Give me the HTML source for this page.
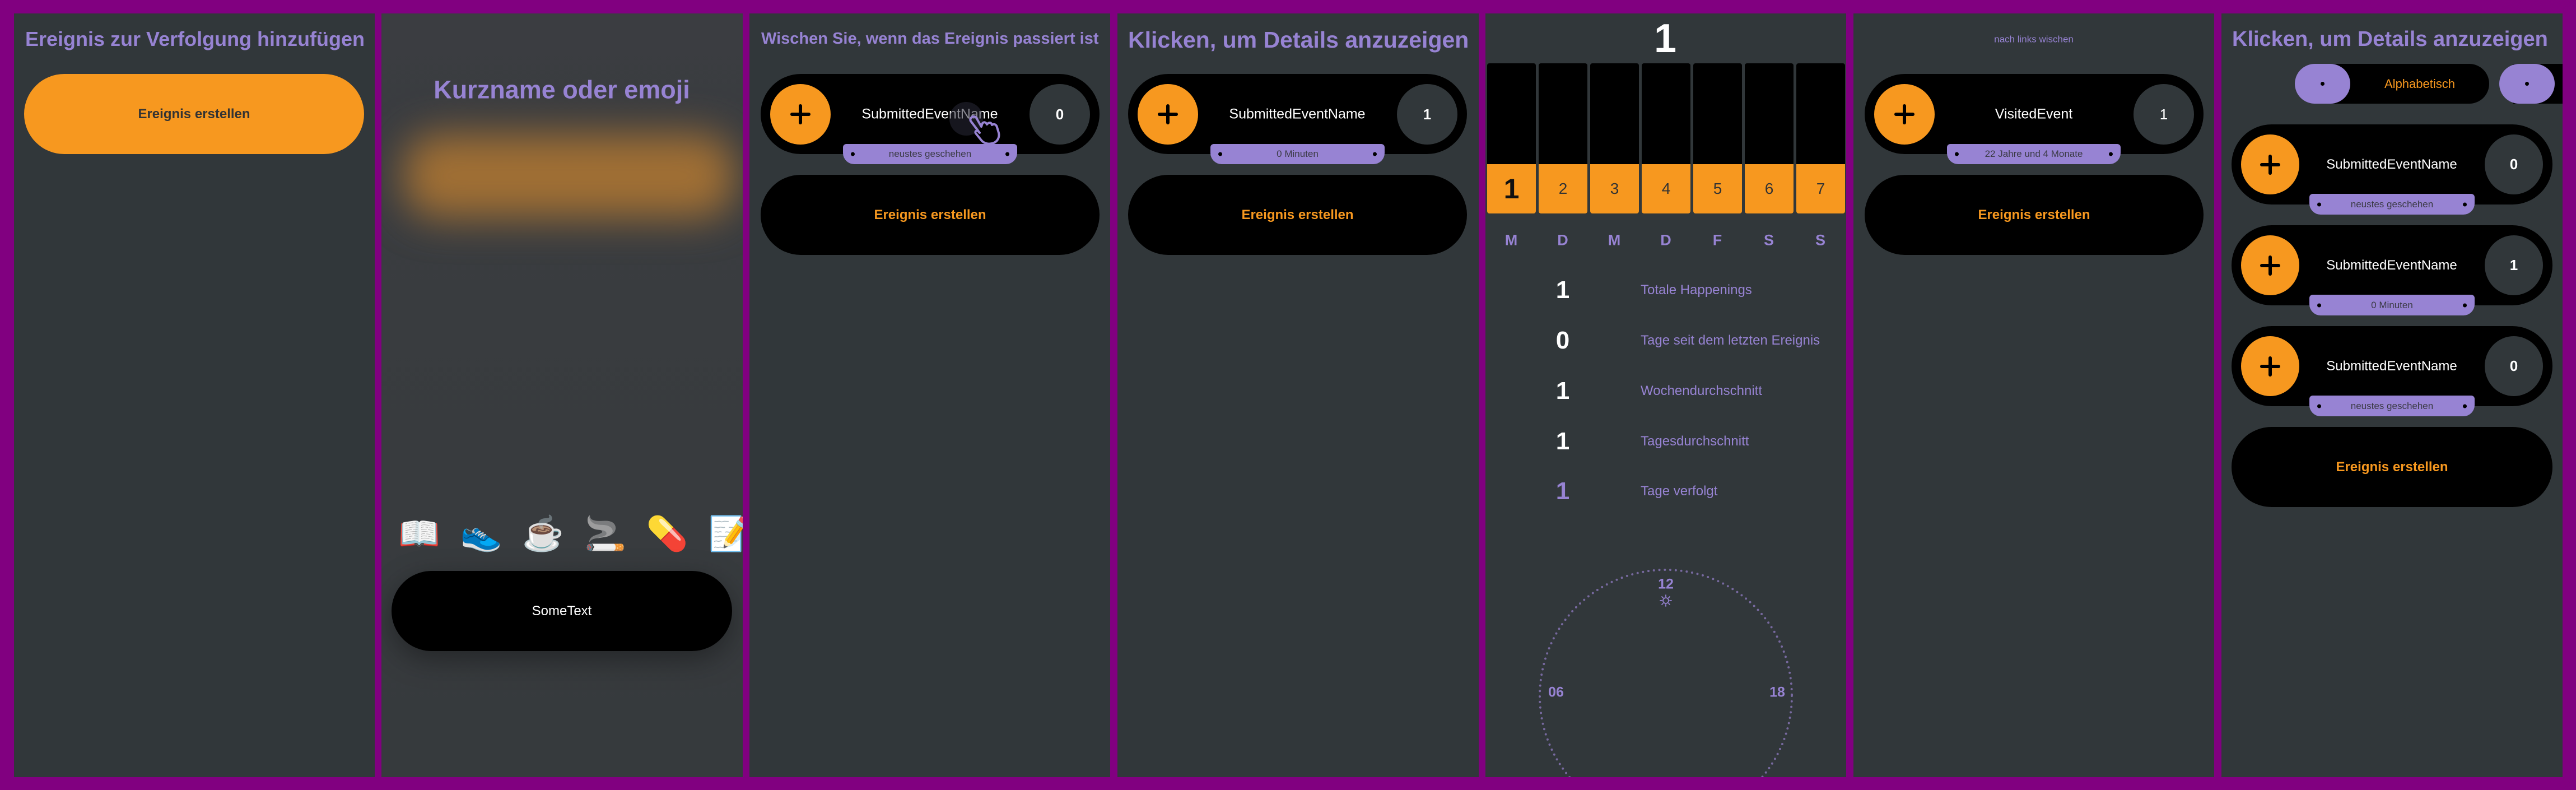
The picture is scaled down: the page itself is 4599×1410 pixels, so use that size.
<!DOCTYPE html>
<html><head><meta charset="utf-8"><style>
*{margin:0;padding:0;box-sizing:border-box}
body{width:4599px;height:1410px;background:#810080;position:relative;overflow:hidden;font-family:"Liberation Sans",sans-serif}
.p{position:absolute;top:24px;height:1363px;background:#31373a;overflow:hidden}
.a{position:absolute}
.t{position:absolute;white-space:nowrap;line-height:1}
.c{transform:translate(-50%,-50%)}
.pur{color:#9783d3}
.card{position:absolute;background:#000;border-radius:72px}
.oc{position:absolute;background:#f7981f;border-radius:50%}
.oc:before,.oc:after{content:"";position:absolute;background:#000;border-radius:3px;left:50%;top:50%;transform:translate(-50%,-50%)}
.oc:before{width:36px;height:6px}.oc:after{width:6px;height:36px}
.cc{position:absolute;background:#31373a;border-radius:50%;color:#fff;font-weight:bold;font-size:26px;display:flex;align-items:center;justify-content:center}
.nm{position:absolute;color:#fff;font-size:25px;white-space:nowrap;transform:translate(-50%,-50%);line-height:1}
.bd{position:absolute;background:#9783d3;border-radius:6px 6px 20px 20px;color:#3a3a44;font-size:17px;display:flex;align-items:center;justify-content:center}
.bd:before,.bd:after{content:"";position:absolute;top:50%;width:7px;height:7px;border-radius:50%;background:#000;transform:translateY(-50%)}
.bd:before{left:14px}.bd:after{right:14px}
.btn{position:absolute;background:#000;border-radius:72px;color:#f7981f;font-weight:bold;font-size:24px;display:flex;align-items:center;justify-content:center}
.col{position:absolute;top:89px;width:87px;height:268px;border-radius:4px;overflow:hidden;background:#000}
.col i{position:absolute;left:0;right:0;bottom:0;height:88px;background:#f7981f;font-style:normal;color:#333;font-size:28px;display:flex;align-items:center;justify-content:center}
</style></head><body>

<!-- Panel 1 -->
<div class="p" style="left:25px;width:644px">
  <div class="t pur" style="left:20px;top:28px;font-size:36px;font-weight:bold">Ereignis zur Verfolgung hinzufügen</div>
  <div class="btn" style="left:18px;top:108px;width:607px;height:143px;background:#f7981f;color:#333">Ereignis erstellen</div>
</div>

<!-- Panel 2 -->
<div class="p" style="left:681px;width:645px;background:linear-gradient(#3b3d41,#383b3e 60%,#363a3d)">
  <div class="a" style="left:40px;top:215px;width:590px;height:150px;background:#a06f34;filter:blur(35px);border-radius:60px"></div>
  <div class="t pur c" style="left:322px;top:136px;font-size:45px;font-weight:bold">Kurzname oder emoji</div>
  <div class="t" style="left:30px;top:899px;font-size:60px;font-family:'Noto Color Emoji','DejaVu Sans',sans-serif;letter-spacing:36px">📖👟☕🚬💊📝</div>
  <div class="btn" style="left:18px;top:995px;width:608px;height:143px;color:#fff;font-weight:normal;box-shadow:0 15px 50px rgba(0,0,0,.35)">SomeText</div>
</div>

<!-- Panel 3 -->
<div class="p" style="left:1338px;width:644px">
  <div class="t pur" style="left:21px;top:31px;font-size:29px;font-weight:bold">Wischen Sie, wenn das Ereignis passiert ist</div>
  <div class="card" style="left:20px;top:108px;width:605px;height:143px">
    <div class="oc" style="left:17px;top:18px;width:108px;height:108px"></div>
    <div class="nm" style="left:302px;top:72px">SubmittedEventName</div>
    <div class="cc" style="right:17px;top:18px;width:108px;height:108px">0</div>
  </div>
  <div class="a" style="left:357px;top:158px;width:60px;height:60px;border-radius:50%;background:rgba(40,40,55,.55)"></div>
  <svg class="a" style="left:390px;top:180px" width="60" height="55" viewBox="0 0 60 55"><path d="M6 6 C10 2 14 4 16 8 L24 22 L26 16 C29 13 32 14 34 18 L36 16 C39 14 42 15 43 19 L45 18 C48 17 51 19 52 23 L55 33 C57 42 52 50 43 52 C35 54 27 51 23 45 L14 34 C12 31 15 28 18 30 L21 33 L5 12 C4 10 4 8 6 6 Z" fill="none" stroke="#9783d3" stroke-width="4" stroke-linejoin="round"/></svg>
  <div class="bd" style="left:167px;top:233px;width:311px;height:36px">neustes geschehen</div>
  <div class="btn" style="left:20px;top:288px;width:605px;height:143px">Ereignis erstellen</div>
</div>

<!-- Panel 4 -->
<div class="p" style="left:1995px;width:645px">
  <div class="t pur" style="left:19px;top:27px;font-size:41px;font-weight:bold">Klicken, um Details anzuzeigen</div>
  <div class="card" style="left:19px;top:108px;width:605px;height:143px">
    <div class="oc" style="left:17px;top:18px;width:108px;height:108px"></div>
    <div class="nm" style="left:302px;top:72px">SubmittedEventName</div>
    <div class="cc" style="right:17px;top:18px;width:108px;height:108px">1</div>
  </div>
  <div class="bd" style="left:166px;top:233px;width:311px;height:36px">0 Minuten</div>
  <div class="btn" style="left:19px;top:288px;width:605px;height:143px">Ereignis erstellen</div>
</div>

<!-- Panel 5 -->
<div class="p" style="left:2652px;width:644px">
  <div class="t c" style="left:321px;top:45px;font-size:72px;font-weight:bold;color:#fff">1</div>
  <div class="col" style="left:3px"><span class="t" style="left:5px;top:239px;color:#fff;font-weight:bold;font-size:27px">00:00</span><i style="color:#111;font-weight:bold;font-size:50px">1</i></div>
  <div class="col" style="left:95px"><i>2</i></div>
  <div class="col" style="left:187px"><i>3</i></div>
  <div class="col" style="left:279px"><i>4</i></div>
  <div class="col" style="left:371px"><i>5</i></div>
  <div class="col" style="left:463px"><i>6</i></div>
  <div class="col" style="left:555px"><i>7</i></div>
  <div class="t pur c" style="left:46px;top:405px;font-size:27px;font-weight:bold">M</div>
  <div class="t pur c" style="left:138px;top:405px;font-size:27px;font-weight:bold">D</div>
  <div class="t pur c" style="left:230px;top:405px;font-size:27px;font-weight:bold">M</div>
  <div class="t pur c" style="left:322px;top:405px;font-size:27px;font-weight:bold">D</div>
  <div class="t pur c" style="left:414px;top:405px;font-size:27px;font-weight:bold">F</div>
  <div class="t pur c" style="left:506px;top:405px;font-size:27px;font-weight:bold">S</div>
  <div class="t pur c" style="left:598px;top:405px;font-size:27px;font-weight:bold">S</div>

  <div class="t c" style="left:138px;top:494px;font-size:44px;font-weight:bold;color:#fff">1</div>
  <div class="t pur" style="left:277px;top:482px;font-size:24px">Totale Happenings</div>
  <div class="t c" style="left:138px;top:584px;font-size:44px;font-weight:bold;color:#fff">0</div>
  <div class="t pur" style="left:277px;top:572px;font-size:24px">Tage seit dem letzten Ereignis</div>
  <div class="t c" style="left:138px;top:674px;font-size:44px;font-weight:bold;color:#fff">1</div>
  <div class="t pur" style="left:277px;top:662px;font-size:24px">Wochendurchschnitt</div>
  <div class="t c" style="left:138px;top:764px;font-size:44px;font-weight:bold;color:#fff">1</div>
  <div class="t pur" style="left:277px;top:752px;font-size:24px">Tagesdurchschnitt</div>
  <div class="t c pur" style="left:138px;top:853px;font-size:44px;font-weight:bold">1</div>
  <div class="t pur" style="left:277px;top:841px;font-size:24px">Tage verfolgt</div>

  <svg class="a" style="left:0;top:0" width="644" height="1363">
    <circle cx="322" cy="1218" r="225" fill="none" stroke="#77699f" stroke-width="4" stroke-linecap="round" stroke-dasharray="0 9.8"/>
    <g stroke="#9783d3" stroke-width="1.8" fill="none" stroke-linecap="round">
      <circle cx="322" cy="1048" r="5"/>
      <path d="M322 1038v3M322 1055v3M312 1048h3M329 1048h3M315 1041l2 2M327 1053l2 2M329 1041l-2 2M315 1055l2 -2"/>
    </g>
  </svg>
  <div class="t pur c" style="left:322px;top:1019px;font-size:25px;font-weight:bold">12</div>
  <div class="t pur c" style="left:126px;top:1212px;font-size:25px;font-weight:bold">06</div>
  <div class="t pur c" style="left:521px;top:1212px;font-size:25px;font-weight:bold">18</div>
</div>

<!-- Panel 6 -->
<div class="p" style="left:3309px;width:644px">
  <div class="t pur c" style="left:322px;top:46px;font-size:17px">nach links wischen</div>
  <div class="card" style="left:20px;top:108px;width:605px;height:143px">
    <div class="oc" style="left:17px;top:18px;width:108px;height:108px"></div>
    <div class="nm" style="left:302px;top:72px">VisitedEvent</div>
    <div class="cc" style="right:17px;top:18px;width:108px;height:108px;font-weight:normal">1</div>
  </div>
  <div class="bd" style="left:167px;top:233px;width:310px;height:36px">22 Jahre und 4 Monate</div>
  <div class="btn" style="left:20px;top:288px;width:605px;height:143px">Ereignis erstellen</div>
</div>

<!-- Panel 7 -->
<div class="p" style="left:3966px;width:609px">
  <div class="t pur" style="left:19px;top:27px;font-size:38px;font-weight:bold">Klicken, um Details anzuzeigen</div>
  <div class="a" style="left:131px;top:90px;width:347px;height:71px;background:#000;border-radius:36px"></div>
  <div class="a" style="left:131px;top:90px;width:99px;height:71px;background:#9783d3;border-radius:36px"></div>
  <div class="a" style="left:177px;top:122px;width:7px;height:7px;background:#000;border-radius:50%"></div>
  <div class="t c" style="left:354px;top:126px;font-size:22px;color:#f7981f">Alphabetisch</div>
  <div class="a" style="left:520px;top:90px;width:100px;height:71px;background:#000"></div>
  <div class="a" style="left:496px;top:90px;width:99px;height:71px;background:#9783d3;border-radius:36px"></div>
  <div class="a" style="left:542px;top:122px;width:7px;height:7px;background:#000;border-radius:50%"></div>

  <div class="card" style="left:18px;top:198px;width:573px;height:143px">
    <div class="oc" style="left:17px;top:18px;width:104px;height:107px"></div>
    <div class="nm" style="left:286px;top:72px;font-size:24px">SubmittedEventName</div>
    <div class="cc" style="right:17px;top:18px;width:104px;height:107px">0</div>
  </div>
  <div class="bd" style="left:157px;top:322px;width:295px;height:37px">neustes geschehen</div>

  <div class="card" style="left:18px;top:378px;width:573px;height:143px">
    <div class="oc" style="left:17px;top:18px;width:104px;height:107px"></div>
    <div class="nm" style="left:286px;top:72px;font-size:24px">SubmittedEventName</div>
    <div class="cc" style="right:17px;top:18px;width:104px;height:107px">1</div>
  </div>
  <div class="bd" style="left:157px;top:502px;width:295px;height:37px">0 Minuten</div>

  <div class="card" style="left:18px;top:558px;width:573px;height:143px">
    <div class="oc" style="left:17px;top:18px;width:104px;height:107px"></div>
    <div class="nm" style="left:286px;top:72px;font-size:24px">SubmittedEventName</div>
    <div class="cc" style="right:17px;top:18px;width:104px;height:107px">0</div>
  </div>
  <div class="bd" style="left:157px;top:682px;width:295px;height:37px">neustes geschehen</div>

  <div class="btn" style="left:18px;top:738px;width:573px;height:143px">Ereignis erstellen</div>
</div>

</body></html>
